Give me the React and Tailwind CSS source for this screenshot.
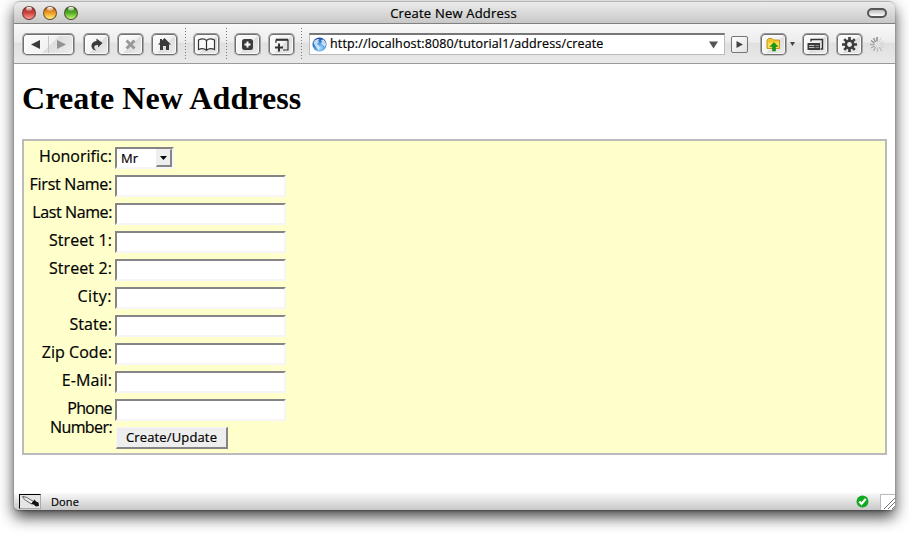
import React from "react";

const fields = [
  ["First Name:", "tracking-[-0.26px]"],
  ["Last Name:", "tracking-[-0.4px]"],
  ["Street 1:", "tracking-[0.1px]"],
  ["Street 2:", "tracking-[0.1px]"],
  ["City:", "tracking-[0.5px]"],
  ["State:", "tracking-[0.05px]"],
  ["Zip Code:", "tracking-[0.05px]"],
  ["E-Mail:", "tracking-[0.1px]"],
  ["Phone Number:", "tracking-[-0.6px]"],
];

const inset =
  "border-2 border-t-[#858585] border-l-[#858585] border-r-[#f6f6f6] border-b-[#f6f6f6] bg-white";

function ToolButton({ className = "", wide = false, children }) {
  return (
    <button
      className={`flex h-[23px] shrink-0 items-center justify-center rounded-[5px] border border-[#a8a8a8] border-t-[#979797] border-b-[#c4c4c4] bg-[linear-gradient(135deg,#fdfdfd_0%,#f2f2f2_52%,#dedede_54%,#eeeeee_100%)] shadow-[inset_0_0_0_1px_#707070,inset_0_0_0_2px_#ffffffb0] ${
        wide ? "w-[53px]" : "w-[27px]"
      } ${className}`}
    >
      {children}
    </button>
  );
}

function Separator({ className = "" }) {
  return (
    <div
      className={`h-[32px] w-px shrink-0 bg-[repeating-linear-gradient(to_bottom,#777_0px,#777_1px,transparent_1px,transparent_3px)] ${className}`}
    />
  );
}

function Light({ className }) {
  return (
    <div
      className={`relative h-[14px] w-[14px] rounded-full border border-[#4d3a36]/80 ${className}`}
    >
      <div className="absolute top-0 left-[3px] h-[4px] w-[6px] rounded-full bg-gradient-to-b from-white to-white/20" />
    </div>
  );
}

function Toolbar() {
  return (
    <div className="flex h-[40px] items-center border-b border-[#999] bg-[linear-gradient(to_bottom,#f8f8f8_0%,#ededed_45%,#e0e0e0_50%,#e9e9e9_100%)] pt-px pl-[8px]">
      <ToolButton wide>
        <svg width="49" height="19" viewBox="0 0 49 19">
          <path d="M7 9.500 16 5v9z" fill="#3b3b3b" />
          <path d="M24.500 1v17" stroke="#c4c4c4" />
          <path d="M42 9.500 33 5v9z" fill="#929292" />
        </svg>
      </ToolButton>
      <ToolButton className="ml-[8px]">
        <svg width="19" height="19" viewBox="0 0 19 19">
          <path
            d="M9.500 3.500 15.500 8 11 12.500V10C8.500 9.800 7 11 7.300 12.800c.2 1.200 1 2 2 2.400-2.300.3-4.500-1-4.800-3.700C4.200 8.500 6.500 6.200 9.500 6z"
            fill="#3b3b3b"
          />
        </svg>
      </ToolButton>
      <ToolButton className="ml-[7px]">
        <svg width="19" height="19" viewBox="0 0 19 19">
          <path d="m5.500 5.500 8 8m0-8-8 8" stroke="#999" strokeWidth="2.900" />
        </svg>
      </ToolButton>
      <ToolButton className="ml-[7px]">
        <svg width="19" height="19" viewBox="0 0 19 19">
          <path
            d="M9.500 3 16 9.500h-2V15h-3v-4H8v4H5V9.500H3L5 7.500V4h2v1.500z"
            fill="#3b3b3b"
          />
        </svg>
      </ToolButton>
      <Separator className="ml-[7px]" />
      <ToolButton className="ml-[7px]">
        <svg width="19" height="19" viewBox="0 0 19 19">
          <path
            d="M9.500 5.500C7.500 3.600 4 3.800 1.500 5v9.500c2.500-1 6-1 8 .8 2-1.800 5.500-1.800 8-.8V5c-2.500-1.200-6-1.400-8 .5zm0 0v9.500"
            fill="#fafafa"
            stroke="#333"
            strokeWidth="1.200"
          />
        </svg>
      </ToolButton>
      <Separator className="ml-[6px]" />
      <ToolButton className="ml-[7px]">
        <svg width="19" height="19" viewBox="0 0 19 19">
          <rect x="4" y="4" width="11" height="11" rx="2.500" fill="#3b3b3b" />
          <path d="M9.500 6.500v6m-3-3h6" stroke="white" strokeWidth="2" />
        </svg>
      </ToolButton>
      <ToolButton className="ml-[7px]">
        <svg width="19" height="19" viewBox="0 0 19 19">
          <path
            d="M4 8V5.200h12V15h-5"
            fill="none"
            stroke="#333"
            strokeWidth="1.200"
          />
          <path d="M4 4.500h12" stroke="#333" strokeWidth="1.600" />
          <path d="M7 8.500v8M3 12.500h8" stroke="#333" strokeWidth="2" />
        </svg>
      </ToolButton>
      <Separator className="ml-[6px]" />
      <div className="ml-[7px] flex h-[22px] w-[416px] shrink-0 items-center border border-t-2 border-[#bbb] border-t-[#777] bg-white pl-[2px]">
        <svg width="15" height="15" viewBox="0 0 15 15">
          <defs>
            <radialGradient id="globe" cx=".55" cy=".75" r=".7">
              <stop offset="0" stopColor="#a9dcff" />
              <stop offset=".6" stopColor="#3d8bdb" />
              <stop offset="1" stopColor="#1d4fa0" />
            </radialGradient>
          </defs>
          <circle cx="7.500" cy="7.500" r="7" fill="url(#globe)" />
          <path
            d="M2.500 3.500 5.500 2l2 .5L6 4l1 1-2 2 2 2 1 2-1.500 3L5 11 3 8.500 1.500 6zM9 3l2.500-.5 2 2.500.5 3-1.500 2L11 8 9 7l1-2z"
            fill="#dcecfb"
            fillOpacity=".85"
          />
        </svg>
        <span className="ml-[3px] w-[374px] text-[12.500px] whitespace-nowrap tracking-[0.14px] [-webkit-text-stroke:0.2px]">
          http://localhost:8080/tutorial1/address/create
        </span>
        <svg className="ml-[5px]" width="10" height="8" viewBox="0 0 10 8">
          <path d="M0 .5h9L4.500 7.500z" fill="#555" />
        </svg>
      </div>
      <button className="ml-[6px] flex h-[17px] w-[17px] shrink-0 items-center justify-center rounded-[2px] border border-[#747474] bg-gradient-to-br from-white to-[#e2e2e2]">
        <svg width="9" height="9" viewBox="0 0 9 9">
          <path d="M1.500 1v7L8 4.500z" fill="#444" />
        </svg>
      </button>
      <ToolButton className="ml-[12px]">
        <svg width="19" height="19" viewBox="0 0 19 19">
          <path
            d="M3 13.500V5L4.500 3.500H8L9.500 5h6v8.500z"
            fill="#f4c52b"
            stroke="#c09a25"
          />
          <path d="M4 7.500h11V13H4z" fill="#ffde55" />
          <path
            d="m10 7.500 4 4h-2.500V16h-3v-4.500H6z"
            fill="#159a18"
            stroke="#0a7b0e"
            strokeWidth=".5"
          />
        </svg>
      </ToolButton>
      <svg className="ml-[3px] shrink-0" width="6" height="4" viewBox="0 0 6 4">
        <path d="M0 0h5L2.500 4z" fill="#444" />
      </svg>
      <ToolButton className="ml-[6px]">
        <svg width="19" height="19" viewBox="0 0 19 19">
          <path
            d="M5 6.500V4.500h11.500V14h-2"
            fill="none"
            stroke="#333"
            strokeWidth="1.400"
          />
          <path d="M1.500 8H14v7H1.500z" fill="#3a3a3a" />
          <path d="M3 10.500h5.500M3 12.500h5.500" stroke="#bbb" />
          <path d="M9.500 10.500h3.500M9.500 12.500h3.500" stroke="#888" />
        </svg>
      </ToolButton>
      <ToolButton className="ml-[7px]">
        <svg width="19" height="19" viewBox="0 0 19 19">
          <path
            d="M9.500 2v15M2 9.500h15M4.200 4.200l10.600 10.600M14.800 4.200 4.200 14.800"
            stroke="#3b3b3b"
            strokeWidth="2.600"
          />
          <circle cx="9.500" cy="9.500" r="5" fill="#3b3b3b" />
          <circle cx="9.500" cy="9.500" r="2.400" fill="#ececec" />
        </svg>
      </ToolButton>
      <svg
        className="ml-[6px] shrink-0"
        width="17"
        height="17"
        viewBox="0 0 17 17"
        fill="none"
        strokeWidth="1.300"
      >
        <path d="M8 1v4.500" stroke="#777" />
        <path d="M4.500 2 6.500 6M2 4.500 5.500 7" stroke="#8b8b8b" />
        <path d="M1 8.500h4.500M2 12l3.500-2M4.500 15l2-4" stroke="#aaa" />
        <path d="M8.500 11.500V16M10.500 11l2 4" stroke="#bbb" />
        <path d="m11.500 10 3.500 2M11.500 8.500H16M11 7l4-2M10 6l2-4" stroke="#d6d6d6" />
      </svg>
    </div>
  );
}

export default function App() {
  return (
    <div className="h-[533px] w-[909px] overflow-hidden bg-white pt-px pl-[14px] font-['Open_Sans','Noto_Sans',sans-serif] text-black">
      <div className="flex h-[509px] w-[881px] flex-col rounded-t-[6px] rounded-b-[5px] shadow-[0_7px_15px_rgba(0,0,0,0.75),0_1px_2px_rgba(0,0,0,0.3)]">
        <div className="flex h-[23px] shrink-0 items-center rounded-t-[6px] border-t border-b border-t-[#b5b5b5] border-b-[#808080] bg-gradient-to-b from-[#ececec] to-[#c8c8c8]">
          <div className="flex w-[100px] gap-[7px] pl-[8px]">
            <Light className="bg-[linear-gradient(#a52d28,#cf443e_50%,#ff9c92)]" />
            <Light className="bg-[linear-gradient(#b95d13,#ef9a25_50%,#fff578)]" />
            <Light className="bg-[linear-gradient(#28740f,#55ae23_50%,#c6f876)]" />
          </div>
          <div className="flex-1 pr-[2px] text-center text-[13px] leading-[20px] whitespace-nowrap">
            <span className="tracking-[0.2px] [-webkit-text-stroke:0.2px]">
              Create New Address
            </span>
          </div>
          <div className="flex w-[100px] justify-end pr-[8px]">
            <div className="h-[10px] w-[20px] rounded-full border-2 border-[#555] bg-gradient-to-b from-[#bbb] to-white" />
          </div>
        </div>
        <Toolbar />
        <main className="flex-1 bg-white px-[8px] pt-[16px]">
          <h1 className="h-[59px] font-['Liberation_Serif',serif] text-[32px] leading-[37px] font-bold tracking-[0.08px] whitespace-nowrap">
            Create New Address
          </h1>
          <form className="h-[316px] w-[865px] border-2 border-[#bbb] bg-[#ffffcc] pt-[6px]">
            <div className="flex h-[28px]">
              <label className="w-[88px] text-right text-[16px] leading-[19px] tracking-[0.02px] [-webkit-text-stroke:0.2px]">
                Honorific:
              </label>
              <div
                className={`ml-[3px] flex h-[22px] w-[59px] items-center justify-between pl-[4px] text-[13px] ${inset}`}
              >
                <span className="relative top-px [-webkit-text-stroke:0.2px]">Mr</span>
                <span className="flex h-[18px] w-[16px] items-center justify-center border border-t-[#eee] border-r-2 border-b-2 border-l-[#eee] border-r-[#858585] border-b-[#858585] bg-[#eee]">
                  <svg width="7" height="4" viewBox="0 0 7 4">
                    <path d="M0 0h7L3.500 4z" />
                  </svg>
                </span>
              </div>
            </div>
            {fields.map(([label, tracking]) => (
              <div key={label} className="flex h-[28px]">
                <label
                  className={`w-[88px] text-right text-[16px] leading-[19px] [-webkit-text-stroke:0.2px] ${tracking}`}
                >
                  {label}
                </label>
                <input className={`ml-[3px] h-[22px] w-[171px] ${inset}`} />
              </div>
            ))}
            <button
              type="button"
              className="ml-[92px] block h-[22px] w-[112px] border border-t-[#f6f6f6] border-r-2 border-b-2 border-l-[#f6f6f6] border-r-[#858585] border-b-[#858585] bg-[#eee] text-[13px] leading-[19px] tracking-[0.15px] whitespace-nowrap [-webkit-text-stroke:0.2px]"
            >
              Create/Update
            </button>
          </form>
        </main>
        <footer className="flex h-[17px] shrink-0 items-center overflow-hidden rounded-b-[5px] bg-gradient-to-b from-[#fafafa] to-[#c8c8c8] pl-[5px] text-[11px]">
          <div className="h-[15px] w-[22px] border border-t-black border-r-[#aaa] border-b-[#aaa] border-l-black bg-[#e5e5e5]">
            <svg width="20" height="13" viewBox="0 0 20 13">
              <path d="m2.500 1.500 4 .8 7 4.200-2 2.500-7-4.500z" fill="#eee" stroke="#555" strokeWidth=".9" />
              <path d="m11 9 3.500-4.500 1.500 2 2.500 1L19 11l-3 .5-2.500-2z" fill="#111" />
            </svg>
          </div>
          <span className="ml-[10px] flex-1 leading-[16px] tracking-[0.1px] [-webkit-text-stroke:0.2px]">
            Done
          </span>
          <svg width="13" height="13" viewBox="0 0 13 13">
            <circle cx="6.500" cy="6.500" r="6" fill="#12a922" />
            <path d="m3.300 6.500 2.200 2.300L9.700 4" fill="none" stroke="white" strokeWidth="2.200" />
          </svg>
          <div className="ml-[11px] h-[16px] w-[15px] border-t border-l border-[#bbb] bg-white">
            <svg width="14" height="15" viewBox="0 0 14 15">
              <path d="M3 14 14 3M7 14l7-7M11 14l3-3" stroke="#777" fill="none" />
            </svg>
          </div>
        </footer>
      </div>
    </div>
  );
}
